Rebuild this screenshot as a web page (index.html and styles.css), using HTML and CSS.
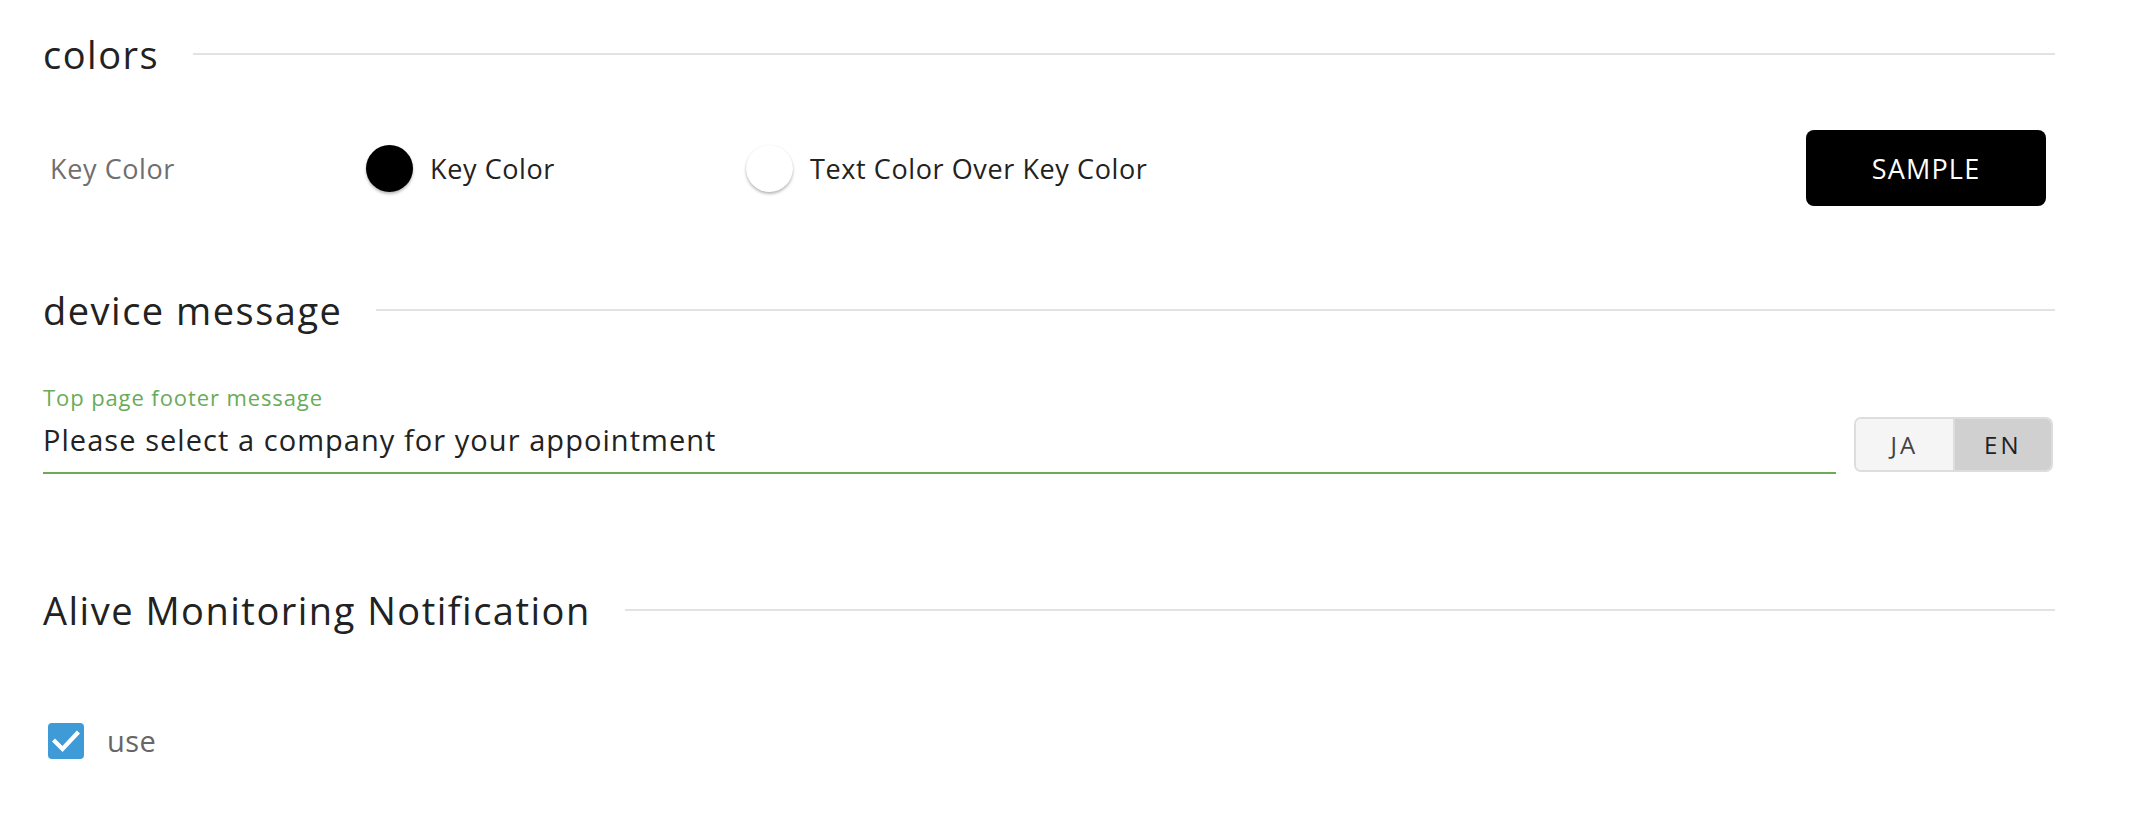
FILE: index.html
```html
<!DOCTYPE html>
<html lang="en">
<head>
<meta charset="utf-8">
<title>Settings</title>
<link rel="stylesheet" href="styles.css">
</head>
<body>
<div class="page">
  <section class="section section-colors">
    <div class="section-title"><h2>colors</h2><span class="rule"></span></div>
    <div class="color-row">
      <div class="row-label">Key Color</div>
      <div class="swatch-group">
        <span class="swatch swatch-black"></span>
        <span class="swatch-text">Key Color</span>
      </div>
      <div class="swatch-group">
        <span class="swatch swatch-white"></span>
        <span class="swatch-text">Text Color Over Key Color</span>
      </div>
      <div class="spacer"></div>
      <button class="sample-btn">SAMPLE</button>
    </div>
  </section>

  <section class="section section-device">
    <div class="section-title"><h2>device message</h2><span class="rule"></span></div>
    <div class="message-row">
      <div class="field">
        <label class="field-label">Top page footer message</label>
        <div class="field-value">Please select a company for your appointment</div>
      </div>
      <div class="lang-toggle">
        <span class="lang lang-ja">JA</span>
        <span class="lang lang-en">EN</span>
      </div>
    </div>
  </section>

  <section class="section section-alive">
    <div class="section-title"><h2>Alive Monitoring Notification</h2><span class="rule"></span></div>
    <div class="check-row">
      <span class="checkbox">
        <svg viewBox="0 0 36 36" width="36" height="36"><path d="M7 18.5 L14.5 26 L29 10.5" fill="none" stroke="#fff" stroke-width="4.2" stroke-linecap="square"/></svg>
      </span>
      <span class="check-label">use</span>
    </div>
  </section>
</div>
</body>
</html>
```

FILE: styles.css
```css
html, body {
  margin: 0;
  padding: 0;
  background: #ffffff;
}

body {
  font-family: "Open Sans", "Noto Sans", sans-serif;
  color: #222222;
}

.page {
  padding: 0 79px 0 43px;
}

.section-title {
  display: flex;
  align-items: center;
  gap: 34px;
  height: 46px;
}

.section-title h2 {
  margin: 0;
  font-size: 38px;
  font-weight: 400;
  line-height: 46px;
  letter-spacing: 1.5px;
  color: #222222;
  white-space: nowrap;
}

.rule {
  flex: 1;
  height: 2px;
  background: #e2e2e2;
}

.section-colors {
  padding-top: 31px;
}

.color-row {
  display: flex;
  align-items: center;
  height: 76px;
  margin-top: 53px;
}

.row-label {
  width: 316px;
  flex: none;
  padding-left: 7px;
  font-size: 27px;
  letter-spacing: 0.6px;
  color: #6f6f6f;
  white-space: nowrap;
}

.swatch-group {
  width: 380px;
  flex: none;
  display: flex;
  align-items: center;
  gap: 17px;
}

.swatch {
  width: 47px;
  height: 47px;
  border-radius: 50%;
  box-shadow: 0 2px 3px rgba(0, 0, 0, 0.28);
  flex: none;
}

.swatch-black {
  background: #000000;
}

.swatch-white {
  background: #ffffff;
  box-shadow: 0 2px 3px rgba(0, 0, 0, 0.28), 0 0 1px rgba(0, 0, 0, 0.08);
}

.swatch-text {
  font-size: 27px;
  letter-spacing: 0.6px;
  color: #222222;
  white-space: nowrap;
}

.spacer {
  flex: 1;
}

.sample-btn {
  width: 240px;
  height: 76px;
  flex: none;
  margin-right: 9px;
  border: none;
  border-radius: 8px;
  background: #000000;
  color: #ffffff;
  font-family: "Open Sans", "Noto Sans", sans-serif;
  font-size: 27px;
  letter-spacing: 1.2px;
}

.section-device {
  margin-top: 81px;
}

.message-row {
  display: flex;
  align-items: flex-end;
  gap: 18px;
  margin-top: 49px;
}

.field {
  flex: 1;
  border-bottom: 2px solid #68ab59;
}

.field-label {
  display: block;
  font-size: 22px;
  line-height: 30px;
  letter-spacing: 0.9px;
  color: #68ab59;
}

.field-value {
  margin-top: 9px;
  padding-bottom: 13px;
  font-size: 29px;
  line-height: 38px;
  letter-spacing: 1.05px;
  color: #222222;
}

.lang-toggle {
  display: flex;
  width: 199px;
  height: 55px;
  margin-bottom: 2px;
  margin-right: 2px;
  box-sizing: border-box;
  border: 2px solid #dddddd;
  border-radius: 7px;
  overflow: hidden;
}

.lang {
  flex: 1;
  display: flex;
  align-items: center;
  justify-content: center;
  font-size: 24px;
  letter-spacing: 3px;
}

.lang-ja {
  background: #f5f5f5;
  color: #444444;
  border-right: 2px solid #dddddd;
}

.lang-en {
  background: #d0d0d0;
  color: #222222;
}

.section-alive {
  margin-top: 113px;
}

.check-row {
  display: flex;
  align-items: center;
  gap: 23px;
  margin-top: 88px;
  padding-left: 5px;
}

.checkbox {
  width: 36px;
  height: 36px;
  border-radius: 4px;
  background: #3e9bd8;
  display: flex;
}

.check-label {
  font-size: 29px;
  letter-spacing: 0.5px;
  color: #666666;
}
```
